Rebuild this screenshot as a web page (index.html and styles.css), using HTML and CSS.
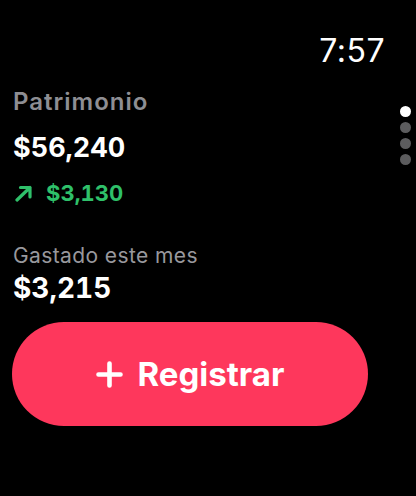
FILE: index.html
```html
<!DOCTYPE html>
<html>
  <head>
    <title>Patrimonio</title>
    <link rel="stylesheet" href="styles.css">
  </head>
  <body>
    <div class="screen">
      <div class="clock">7:57</div>

      <div class="label strong">Patrimonio</div>
      <div class="amount">$56,240</div>
      <div class="change">
        <svg class="arrow" width="18" height="17" viewBox="0 0 18 17">
          <path d="M2 15 L15 2.5 M5.5 2.5 H15 V12" fill="none" stroke="#2fc06a" stroke-width="3.2" stroke-linecap="round" stroke-linejoin="round" />
        </svg>
        <span>$3,130</span>
      </div>

      <div class="label light spent">Gastado este mes</div>
      <div class="amount spent-amount">$3,215</div>

      <button class="register">
        <svg class="plus" width="27" height="27" viewBox="0 0 27 27">
          <path d="M13.5 2.5 V24.5 M2.5 13.5 H24.5" stroke="#fff" stroke-width="4.6" stroke-linecap="round" />
        </svg>
        <span>Registrar</span>
      </button>

      <!-- page indicator -->
      <div class="pager">
        <span class="dot active"></span>
        <span class="dot"></span>
        <span class="dot"></span>
        <span class="dot"></span>
      </div>
    </div>
  </body>
</html>
```

FILE: styles.css
```css
body {
  margin: 0;
  background-color: #000;
  font-family: Inter, "Noto Sans", sans-serif;
  color: #fff;
}
.screen {
  position: relative;
  width: 416px;
  height: 496px;
  padding: 31px 48px 0 12px;
  box-sizing: border-box;
  display: flex;
  flex-direction: column;
  align-items: flex-start;
}
.clock {
  align-self: flex-end;
  font-size: 32px;
  line-height: 40px;
  font-weight: 400;
  letter-spacing: 0.5px;
  margin-right: -17px;
}
.label {
  color: #8e8e93;
  margin-left: 1px;
}
.strong {
  margin-top: 17px;
  font-size: 24px;
  line-height: 28px;
  font-weight: 600;
  letter-spacing: 1px;
}
.light {
  font-size: 21px;
  line-height: 26px;
  font-weight: 400;
  letter-spacing: 0.4px;
  color: #98989d;
}
.amount {
  font-size: 27px;
  line-height: 32px;
  font-weight: 700;
  margin-top: 16px;
  margin-left: 1px;
  font-variant-numeric: tabular-nums;
}
.change {
  display: flex;
  align-items: center;
  gap: 13px;
  margin-top: 16px;
  margin-left: 3px;
  color: #2fc06a;
  font-size: 22px;
  line-height: 26px;
  font-weight: 700;
  font-variant-numeric: tabular-nums;
}
.spent {
  margin-top: 37px;
}
.spent-amount {
  margin-top: 3px;
  font-size: 28px;
}
.register {
  margin-top: 18px;
  width: 356px;
  height: 104px;
  border: none;
  border-radius: 52px;
  background-color: #fe375c;
  color: #fff;
  font-family: Inter, "Noto Sans", sans-serif;
  font-size: 33px;
  font-weight: 700;
  display: flex;
  align-items: center;
  justify-content: center;
  gap: 15px;
  padding: 0;
}
.plus {
  margin-top: 1px;
}
.pager {
  position: absolute;
  right: 5px;
  top: 106px;
  display: flex;
  flex-direction: column;
  gap: 5px;
}
.dot {
  width: 11px;
  height: 11px;
  border-radius: 50%;
  background-color: #5c5c5e;
}
.dot.active {
  background-color: #fff;
}
```
